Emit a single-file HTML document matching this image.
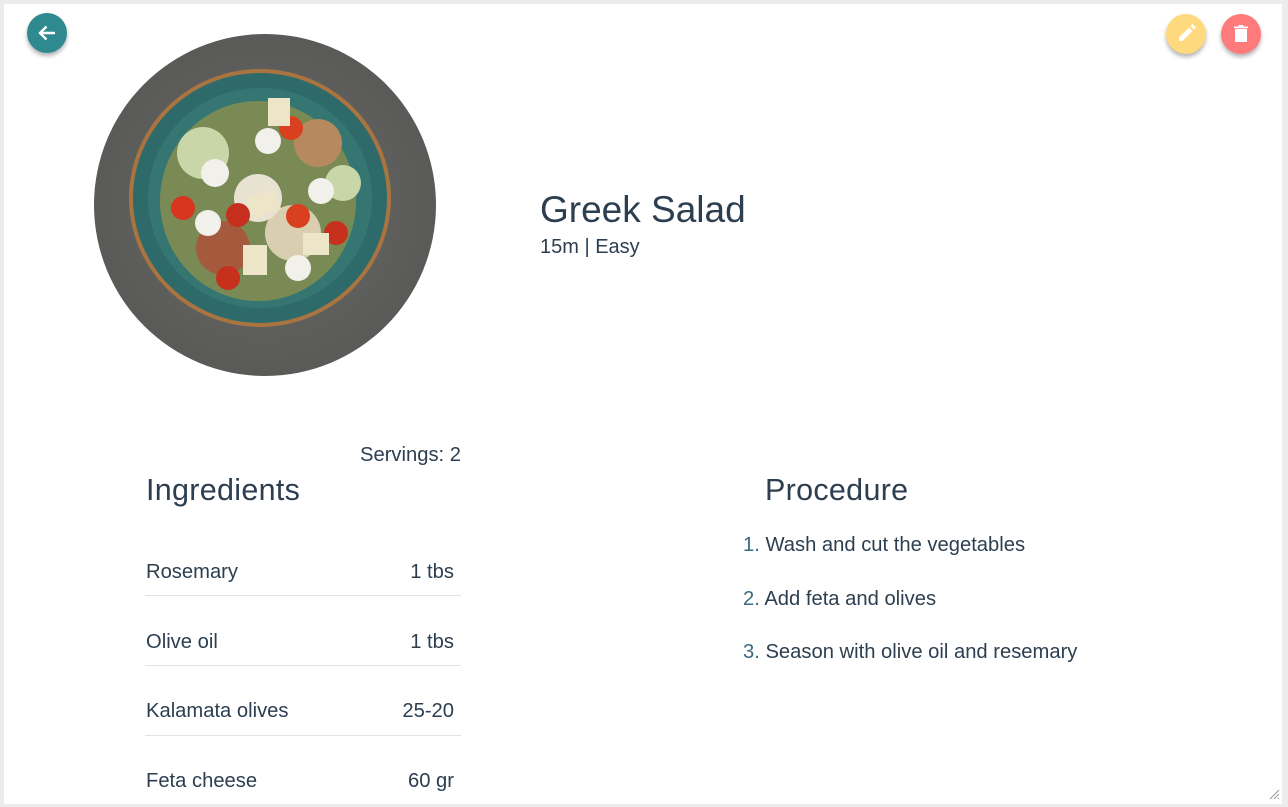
<!DOCTYPE html>
<html><head><meta charset="utf-8"><style>
html,body{margin:0;padding:0;}
body{width:1288px;height:807px;background:#ececec;position:relative;overflow:hidden;font-family:"Liberation Sans",sans-serif;color:#2c3e50;}
.page{position:absolute;left:4px;top:4px;width:1278px;height:800px;background:#fff;}
.a{position:absolute;white-space:nowrap;}
.btn{position:absolute;width:40px;height:40px;border-radius:50%;box-shadow:0 3px 4px rgba(0,0,0,.3);}
.b{font-size:20.2px;}
.h{font-size:30.5px;font-weight:300;letter-spacing:.3px;}
.line{position:absolute;left:145px;width:316px;height:1px;background:#e4e4de;}
.n{color:#3a6a80;}
</style></head><body>
<div class="page"></div>
<div class="btn" style="left:27px;top:13px;background:#2e8a8e;">
<svg width="40" height="40" viewBox="0 0 40 40"><path d="M28 20H13M19.5 13.5L13 20l6.5 6.5" stroke="#fff" stroke-width="2.4" fill="none"/></svg></div>
<div class="btn" style="left:1166px;top:14px;background:#ffd97d;">
<svg width="40" height="40" viewBox="0 0 40 40"><path d="M13 27v-3.5l10-10 3.5 3.5-10 10z M24.5 12l2-2 3.5 3.5-2 2z" fill="#fff"/></svg></div>
<div class="btn" style="left:1221px;top:14px;background:#ff7b7b;">
<svg width="40" height="40" viewBox="0 0 40 40"><path d="M14 15h12v13h-12z" fill="#fff"/><path d="M13 12.5h14v1.8h-14z M17.5 11h5v2h-5z" fill="#fff"/></svg></div>

<svg class="a" style="left:93px;top:33px;" width="344" height="344" viewBox="0 0 344 344">
<defs><radialGradient id="g" cx="50%" cy="50%" r="60%"><stop offset="0" stop-color="#6a6a68"/><stop offset="1" stop-color="#565654"/></radialGradient>
<clipPath id="c"><circle cx="172" cy="172" r="171"/></clipPath></defs>
<g clip-path="url(#c)">
<rect width="344" height="344" fill="url(#g)"/>
<ellipse cx="167" cy="165" rx="131" ry="129" fill="#a9743f"/>
<ellipse cx="167" cy="165" rx="127" ry="125" fill="#2f6a6b"/>
<ellipse cx="167" cy="165" rx="112" ry="110" fill="#357673"/>
<ellipse cx="165" cy="168" rx="98" ry="100" fill="#7a8a55"/>
<circle cx="110" cy="120" r="26" fill="#c8d6a8"/>
<circle cx="225" cy="110" r="24" fill="#b68a5e"/>
<circle cx="200" cy="200" r="28" fill="#d9cfb0"/>
<circle cx="130" cy="215" r="27" fill="#a55a3e"/>
<circle cx="165" cy="165" r="24" fill="#e8e2d2"/>
<circle cx="250" cy="150" r="18" fill="#c8d6a8"/>
<circle cx="90" cy="175" r="12" fill="#d8351f"/>
<circle cx="145" cy="182" r="12" fill="#c62e1e"/>
<circle cx="205" cy="183" r="12" fill="#d9401f"/>
<circle cx="243" cy="200" r="12" fill="#c8301e"/>
<circle cx="135" cy="245" r="12" fill="#c8301e"/>
<circle cx="198" cy="95" r="12" fill="#d9401f"/>
<circle cx="175" cy="108" r="13" fill="#f2f0ea"/>
<circle cx="122" cy="140" r="14" fill="#f2f0ea"/>
<circle cx="228" cy="158" r="13" fill="#f2f0ea"/>
<circle cx="115" cy="190" r="13" fill="#f2f0ea"/>
<circle cx="205" cy="235" r="13" fill="#f2f0ea"/>
<rect x="155" y="160" width="30" height="22" fill="#ede5c8" transform="rotate(-20 170 170)"/>
<rect x="150" y="212" width="24" height="30" fill="#ede5c8"/>
<rect x="210" y="200" width="26" height="22" fill="#ede5c8"/>
<rect x="175" y="65" width="22" height="28" fill="#ede5c8"/>
</g></svg>

<div class="a" style="left:540px;top:189px;font-size:37px;font-weight:300;">Greek Salad</div>
<div class="a" style="left:540px;top:236px;font-size:20px;">15m | Easy</div>

<div class="a b" style="left:360px;top:444px;">Servings: 2</div>
<div class="a h" style="left:146px;top:473px;">Ingredients</div>

<div class="a b" style="left:146px;top:561px;">Rosemary</div><div class="a b" style="right:834px;top:561px;">1 tbs</div>
<div class="line" style="top:595px;"></div>
<div class="a b" style="left:146px;top:631px;">Olive oil</div><div class="a b" style="right:834px;top:631px;">1 tbs</div>
<div class="line" style="top:665px;"></div>
<div class="a b" style="left:146px;top:700px;">Kalamata olives</div><div class="a b" style="right:834px;top:700px;">25-20</div>
<div class="line" style="top:735px;"></div>
<div class="a b" style="left:146px;top:770px;">Feta cheese</div><div class="a b" style="right:834px;top:770px;">60 gr</div>

<div class="a h" style="left:765px;top:473px;">Procedure</div>
<div class="a b" style="left:743px;top:534px;"><span class="n">1.</span> Wash and cut the vegetables</div>
<div class="a b" style="left:743px;top:588px;"><span class="n">2.</span> Add feta and olives</div>
<div class="a b" style="left:743px;top:641px;"><span class="n">3.</span> Season with olive oil and resemary</div>

<svg class="a" style="left:1268px;top:788px;" width="12" height="12"><path d="M11 2L2 11M11 6L6 11M11 10L10 11" stroke="#999" stroke-width="1"/></svg>
</body></html>
